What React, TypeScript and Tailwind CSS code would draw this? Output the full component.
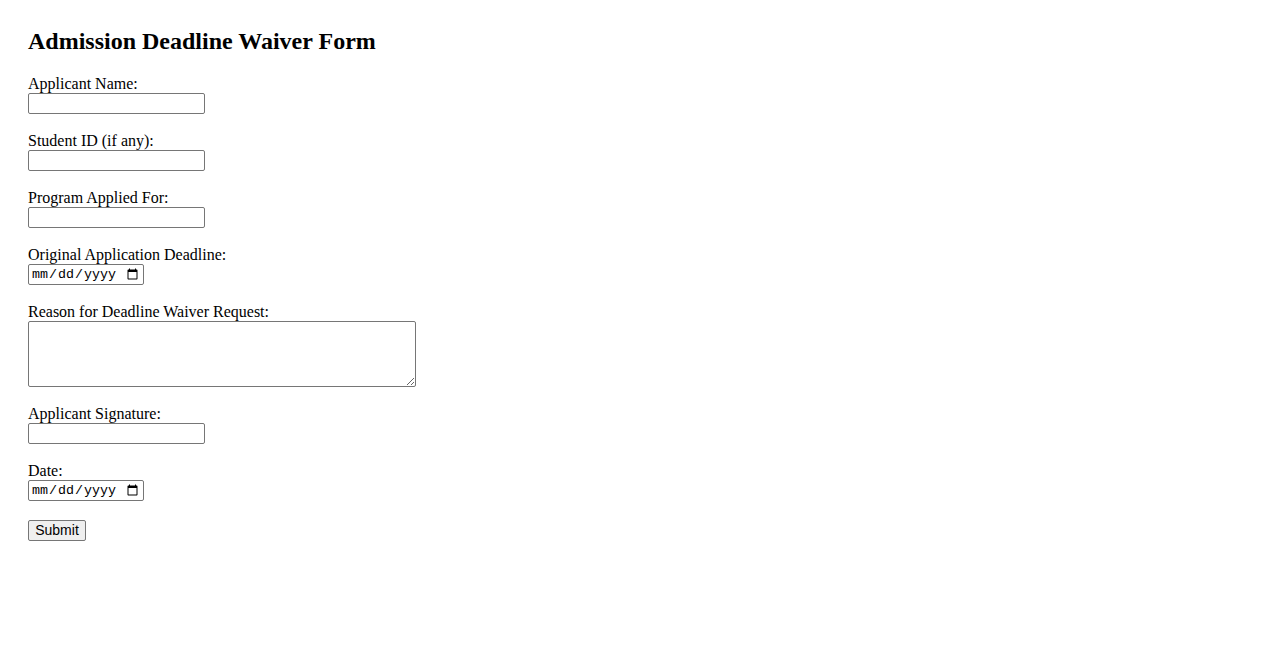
import React from 'react';

const inputCls =
  "block h-[21px] border border-[#767676] rounded-[2px] bg-white px-[2px] py-[1px] font-['Liberation_Sans',Arial,sans-serif] text-[13.33px] text-black";

const dateCls =
  "block h-[21px] w-[116px] border border-[#767676] rounded-[2px] bg-white px-[2px] py-[1px] font-['Liberation_Mono','Courier_New',monospace] text-[13.33px] text-black";

function Field({ label, children, last }: { label: string; children: React.ReactNode; last?: boolean }) {
  return (
    <div className={last ? 'mb-[19px]' : 'mb-[18px]'}>
      <label className="block leading-[18px]">{label}</label>
      {children}
    </div>
  );
}

export default function App() {
  return (
    <div className="min-h-screen bg-white px-[28px] pt-[28px] font-['Liberation_Serif','Times_New_Roman',serif] text-[16px] text-black">
      <h2 className="mb-[20px] text-[24px] font-bold leading-[27px]">Admission Deadline Waiver Form</h2>
      <form onSubmit={(e) => e.preventDefault()}>
        <Field label="Applicant Name:">
          <input type="text" className={`${inputCls} w-[177px]`} />
        </Field>
        <Field label="Student ID (if any):">
          <input type="text" className={`${inputCls} w-[177px]`} />
        </Field>
        <Field label="Program Applied For:">
          <input type="text" className={`${inputCls} w-[177px]`} />
        </Field>
        <Field label="Original Application Deadline:">
          <input type="date" className={dateCls} />
        </Field>
        <Field label="Reason for Deadline Waiver Request:">
          <textarea className="block h-[66px] w-[388px] resize rounded-[2px] border border-[#767676] bg-white px-[2px] py-[2px] font-['Liberation_Mono',monospace] text-[13.33px]" />
        </Field>
        <Field label="Applicant Signature:">
          <input type="text" className={`${inputCls} w-[177px]`} />
        </Field>
        <Field label="Date:" last>
          <input type="date" className={dateCls} />
        </Field>
        <button
          type="submit"
          className="block h-[21px] w-[58px] rounded-[2px] border border-[#767676] bg-[#efefef] text-center font-['Liberation_Sans',Arial,sans-serif] text-[14px] leading-[17px] text-black"
        >
          Submit
        </button>
      </form>
    </div>
  );
}
